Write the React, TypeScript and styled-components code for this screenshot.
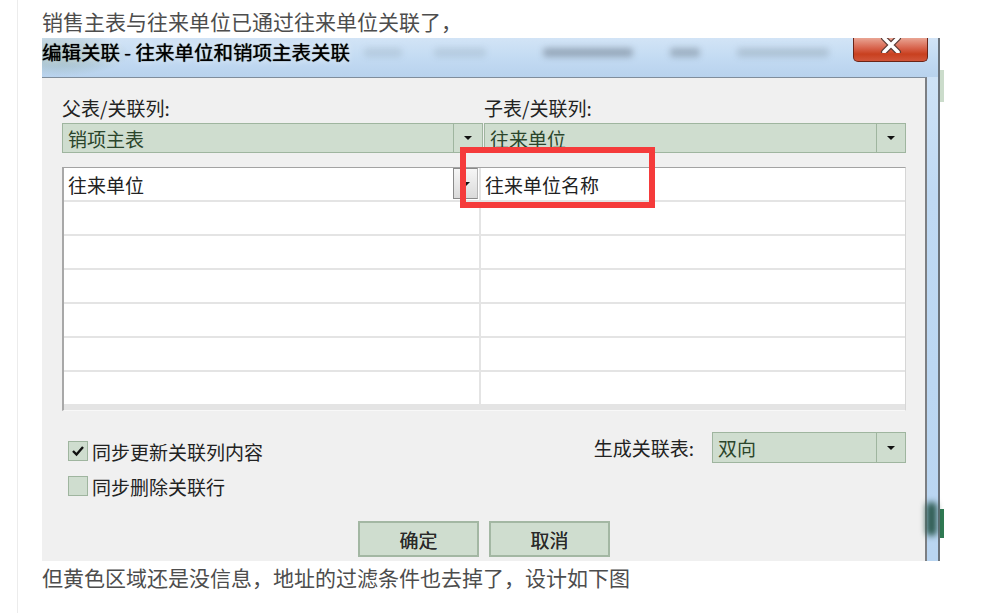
import styled, { createGlobalStyle } from "styled-components";

const GlobalStyle = createGlobalStyle`
  html, body {
    margin: 0;
    padding: 0;
    background: #fff;
  }
  body {
    font-family: "Noto Sans CJK SC", "Noto Sans", sans-serif;
  }
`;

const Page = styled.div`
  margin-left: 17px;
  border-left: 1px solid #ececec;
  padding-left: 24px;
  min-height: 613px;
  box-sizing: border-box;
`;

const Para = styled.p<{ $pad: string }>`
  margin: 0;
  padding: ${(p) => p.$pad};
  font-size: 21px;
  line-height: 32px;
  color: #4d4d4d;
  white-space: nowrap;
`;

const Shot = styled.div`
  display: flex;
`;

const Window = styled.div`
  position: relative;
  width: 898px;
  height: 523px;
  display: flex;
  flex-direction: column;
  box-sizing: border-box;
  border-right: 2px solid #6b737b;
  background: linear-gradient(180deg, #d3e5f7 0%, #bfd9f3 30%, #b9d5f1 100%);
`;

const TitleBar = styled.div`
  position: relative;
  height: 39px;
  display: flex;
  align-items: flex-start;
  background:
    radial-gradient(ellipse 70px 22px at 18px 16px, rgba(110, 140, 110, 0.45), transparent),
    linear-gradient(180deg, #d2e4f6 0%, #c2daf2 55%, #b8d2ed 100%);
`;

const Title = styled.div`
  font-size: 19.5px;
  font-weight: 400;
  line-height: 28px;
  color: #000;
  white-space: nowrap;
  text-shadow: 0 0 1px #000, 0 0 6px rgba(255, 255, 255, 0.9);
`;

const Blob = styled.span<{ $x: number; $w: number; $o: number }>`
  position: absolute;
  top: 10px;
  left: ${(p) => p.$x}px;
  width: ${(p) => p.$w}px;
  height: 9px;
  background: rgba(60, 70, 80, ${(p) => p.$o});
  filter: blur(3px);
  border-radius: 4px;
`;

const CloseBtn = styled.div`
  margin-left: auto;
  margin-right: 10px;
  width: 75px;
  height: 24px;
  box-sizing: border-box;
  border: 1px solid #6a2418;
  border-top: none;
  border-radius: 0 0 5px 5px;
  background: linear-gradient(180deg, #e9a594 0%, #d7614a 45%, #c8401f 70%, #d1553a 100%);
  display: flex;
  justify-content: center;
  align-items: flex-start;
`;

const Body = styled.div`
  flex: 1;
  display: flex;
`;

const Client = styled.div`
  position: relative;
  width: 885px;
  box-sizing: border-box;
  border-top: 1px solid #7f8d9b;
  border-right: 2px solid #7c7f83;
  background: #f0f0f0;
  padding: 0 19px 0 20px;
  display: flex;
  flex-direction: column;
`;

const FrameGlow = styled.span`
  position: absolute;
  right: 1px;
  top: 464px;
  width: 11px;
  height: 34px;
  background: #2c5a50;
  filter: blur(3px);
  border-radius: 5px;
`;

const Pair = styled.div<{ $top: number }>`
  display: grid;
  grid-template-columns: 421px 1fr;
  column-gap: 1px;
  margin-top: ${(p) => p.$top}px;
`;

const Label = styled.div`
  font-size: 19px;
  line-height: 24px;
  color: #222;
  white-space: nowrap;
`;

const Combo = styled.div<{ $h?: number; $w?: number }>`
  height: ${(p) => p.$h ?? 30}px;
  width: ${(p) => (p.$w ? `${p.$w}px` : "auto")};
  box-sizing: border-box;
  border: 1px solid #9fb59f;
  background: #cfddcf;
  display: flex;
  align-items: center;
`;

const ComboText = styled.div`
  flex: 1;
  padding-left: 5px;
  font-size: 19px;
  color: #2b452b;
  white-space: nowrap;
`;

const ComboBtn = styled.div`
  width: 28px;
  align-self: stretch;
  border-left: 1px solid #9fb59f;
  display: flex;
  align-items: center;
  justify-content: center;
`;

const Arrow = styled.span`
  width: 0;
  height: 0;
  border-left: 4px solid transparent;
  border-right: 4px solid transparent;
  border-top: 4px solid #111;
`;

const Grid = styled.div`
  margin-top: 14px;
  height: 244px;
  box-sizing: border-box;
  border-top: 1px solid #a3a3a3;
  border-left: 2px solid #a8a8a8;
  border-right: 1px solid #d6d6d6;
  border-bottom: 1px solid #f8f8f8;
  background: #e4e4e4;
  display: flex;
  flex-direction: column;
`;

const Row = styled.div`
  height: 34px;
  box-sizing: border-box;
  border-bottom: 2px solid #e4e4e4;
  background: #fff;
  display: grid;
  grid-template-columns: 417px 1fr;
`;

const Cell = styled.div<{ $first?: boolean }>`
  display: flex;
  align-items: stretch;
  border-right: ${(p) => (p.$first ? "2px solid #e4e4e4" : "none")};
  font-size: 19px;
  color: #222;
  white-space: nowrap;
`;

const CellText = styled.div`
  flex: 1;
  padding-left: 4px;
  display: flex;
  align-items: center;
`;

const CellBtn = styled.div`
  width: 25px;
  height: 31px;
  margin-right: 1px;
  box-sizing: border-box;
  border: 1px solid #8a8a8a;
  border-right-color: #b5b5b5;
  background: linear-gradient(180deg, #f6f6f6, #dadada);
  display: flex;
  align-items: center;
  justify-content: center;
`;

const Bottom = styled.div`
  margin-top: 21px;
  display: flex;
  justify-content: space-between;
`;

const Checks = styled.div`
  padding: 9px 0 0 6px;
  display: flex;
  flex-direction: column;
  gap: 15px;
`;

const CheckRow = styled.div`
  display: flex;
  align-items: center;
  gap: 4px;
  height: 20px;
`;

const Box = styled.div`
  width: 20px;
  height: 20px;
  box-sizing: border-box;
  border: 1px solid #9fb59f;
  background: #cfddcf;
  display: flex;
  align-items: center;
  justify-content: center;
`;

const CheckLabel = styled.span`
  font-size: 19px;
  color: #222;
  white-space: nowrap;
`;

const MakeTable = styled.div`
  display: flex;
  align-items: flex-start;
  gap: 18px;
  height: 64px;
`;

const MakeLabel = styled.div`
  font-size: 19px;
  line-height: 31px;
  color: #222;
`;

const Buttons = styled.div`
  margin-top: 25px;
  display: flex;
  justify-content: center;
  gap: 10px;
`;

const Button = styled.div`
  width: 121px;
  height: 36px;
  box-sizing: border-box;
  border: 2px solid #a3b7a3;
  background: #cfddcf;
  display: flex;
  align-items: center;
  justify-content: center;
  font-size: 19px;
  color: #2a2a2a;
  text-shadow: 0 0 0.6px #333;
`;

const RedMark = styled.div`
  position: absolute;
  left: 418px;
  top: 69px;
  width: 195px;
  height: 61px;
  box-sizing: border-box;
  border: 6px solid #f53b3b;
`;

const Strip = styled.div`
  width: 4px;
  display: flex;
  flex-direction: column;
`;

const StripBlock = styled.div<{ $top: number; $h: number; $c: string }>`
  margin-top: ${(p) => p.$top}px;
  height: ${(p) => p.$h}px;
  background: ${(p) => p.$c};
`;

const rows = [0, 1, 2, 3, 4, 5, 6];

export default function App() {
  return (
    <Page>
      <GlobalStyle />
      <Para $pad="5px 0 1px">销售主表与往来单位已通过往来单位关联了，</Para>
      <Shot>
        <Window>
          <TitleBar>
            <Title>编辑关联 - 往来单位和销项主表关联</Title>
            <Blob $x={322} $w={38} $o={0.12} />
            <Blob $x={392} $w={52} $o={0.12} />
            <Blob $x={501} $w={90} $o={0.35} />
            <Blob $x={628} $w={30} $o={0.3} />
            <Blob $x={695} $w={92} $o={0.18} />
            <CloseBtn>
              <svg width="22" height="15" viewBox="0 0 22 15">
                <path d="M4 0 L18 14 M18 0 L4 14" stroke="#5a3a34" strokeWidth="6" strokeLinecap="round" />
                <path d="M4 0 L18 14 M18 0 L4 14" stroke="#fff" strokeWidth="3.6" strokeLinecap="round" />
              </svg>
            </CloseBtn>
          </TitleBar>
          <Body>
            <Client>
              <Pair $top={18}>
                <Label>父表/关联列:</Label>
                <Label>子表/关联列:</Label>
              </Pair>
              <Pair $top={3}>
                <Combo>
                  <ComboText>销项主表</ComboText>
                  <ComboBtn>
                    <Arrow />
                  </ComboBtn>
                </Combo>
                <Combo>
                  <ComboText>往来单位</ComboText>
                  <ComboBtn>
                    <Arrow />
                  </ComboBtn>
                </Combo>
              </Pair>
              <Grid>
                {rows.map((i) => (
                  <Row key={i}>
                    <Cell $first>
                      <CellText>{i === 0 ? "往来单位" : ""}</CellText>
                      {i === 0 && (
                        <CellBtn>
                          <Arrow />
                        </CellBtn>
                      )}
                    </Cell>
                    <Cell>
                      <CellText>{i === 0 ? "往来单位名称" : ""}</CellText>
                    </Cell>
                  </Row>
                ))}
              </Grid>
              <Bottom>
                <Checks>
                  <CheckRow>
                    <Box>
                      <svg width="14" height="14" viewBox="0 0 14 14">
                        <path d="M2 7 L5.5 10.5 L12 3" fill="none" stroke="#111" strokeWidth="2.4" />
                      </svg>
                    </Box>
                    <CheckLabel>同步更新关联列内容</CheckLabel>
                  </CheckRow>
                  <CheckRow>
                    <Box />
                    <CheckLabel>同步删除关联行</CheckLabel>
                  </CheckRow>
                </Checks>
                <MakeTable>
                  <MakeLabel>生成关联表:</MakeLabel>
                  <Combo $h={31} $w={194}>
                    <ComboText>双向</ComboText>
                    <ComboBtn>
                      <Arrow />
                    </ComboBtn>
                  </Combo>
                </MakeTable>
              </Bottom>
              <Buttons>
                <Button>确定</Button>
                <Button>取消</Button>
              </Buttons>
              <RedMark />
            </Client>
          </Body>
          <FrameGlow />
        </Window>
        <Strip>
          <StripBlock $top={32} $h={32} $c="#cbdccb" />
          <StripBlock $top={407} $h={29} $c="#2f7a52" />
        </Strip>
      </Shot>
      <Para $pad="0">但黄色区域还是没信息，地址的过滤条件也去掉了，设计如下图</Para>
    </Page>
  );
}
